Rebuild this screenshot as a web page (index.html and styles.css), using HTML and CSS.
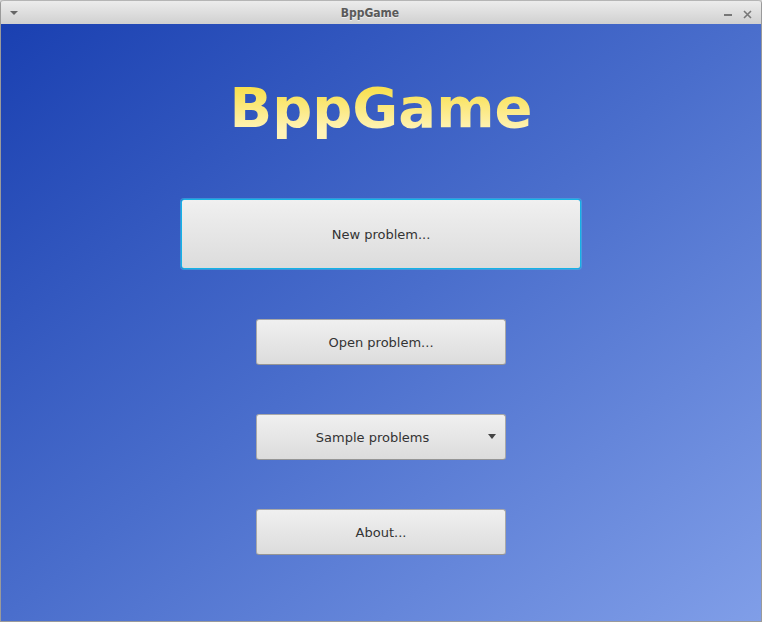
FILE: index.html
```html
<!DOCTYPE html>
<html>
<head>
<meta charset="utf-8">
<title>BppGame</title>
<link rel="stylesheet" href="styles.css">
</head>
<body>
<div class="window">
  <div class="titlebar">
    <span class="tb-menu"></span>
    <span class="tb-title">BppGame</span>
    <span class="tb-controls">
      <span class="tb-min"></span>
      <svg class="tb-close" width="9" height="9" viewBox="0 0 9 9"><path d="M1 1L8 8M8 1L1 8" stroke="#777" stroke-width="1.6"/></svg>
    </span>
  </div>
  <div class="content">
    <h1 class="logo">BppGame</h1>
    <button class="btn btn-big">New problem...</button>
    <button class="btn">Open problem...</button>
    <button class="btn btn-menu"><span class="btn-label">Sample problems</span><span class="arrow"></span></button>
    <button class="btn">About...</button>
  </div>
</div>
</body>
</html>
```
FILE: styles.css
```css
html, body {
  margin: 0;
  padding: 0;
  width: 762px;
  height: 622px;
  overflow: hidden;
  background: #d6d6d6;
}
.window {
  width: 762px;
  height: 622px;
  box-sizing: border-box;
  border: 1px solid #9a9a9a;
  border-top: none;
  border-radius: 4px 4px 0 0;
  display: flex;
  flex-direction: column;
  overflow: hidden;
}
.titlebar {
  height: 23px;
  flex: none;
  background: linear-gradient(#ececec, #d0d0d0);
  border-top: 1px solid #b5b5b5;
  border-radius: 4px 4px 0 0;
  display: flex;
  align-items: center;
  position: relative;
  margin: 0 -1px;
}
.tb-menu {
  position: absolute;
  left: 10px;
  top: 10px;
  width: 0;
  height: 0;
  border-left: 4px solid transparent;
  border-right: 4px solid transparent;
  border-top: 4px solid #666;
}
.tb-title {
  flex: 1;
  text-align: center;
  padding-right: 22px;
  font-family: "DejaVu Sans Condensed", "DejaVu Sans", sans-serif;
  font-weight: bold;
  font-size: 12px;
  color: #5a5a5a;
  text-shadow: 0 1px 0 rgba(255,255,255,0.6);
}
.tb-controls {
  position: absolute;
  right: 10px;
  top: 9px;
  display: flex;
  align-items: center;
  gap: 11px;
}
.tb-min {
  width: 8px;
  height: 2px;
  background: #777;
}
.tb-close { display: block; }
.content {
  flex: 1;
  background: linear-gradient(to bottom right, #1a40b1 0%, #4a6ecc 50%, #809ee8 100%);
  display: flex;
  flex-direction: column;
  align-items: center;
}
.logo {
  margin: 52px 0 0 0;
  font-family: "DejaVu Sans", sans-serif;
  font-weight: bold;
  font-size: 56px;
  line-height: 64px;
  background: linear-gradient(#f8e050 20%, #fff3b8 85%);
  -webkit-background-clip: text;
  background-clip: text;
  color: transparent;
}
.btn {
  width: 250px;
  height: 46px;
  box-sizing: border-box;
  border: 1px solid #a8a8a8;
  border-bottom-color: #959595;
  border-radius: 3px;
  background: linear-gradient(#f0f0f0, #dcdcdc);
  font-family: "DejaVu Sans", sans-serif;
  font-size: 13px;
  color: #333;
  padding: 0;
  margin: 49px 0 0 0;
  display: flex;
  align-items: center;
  justify-content: center;
}
.btn-big {
  width: 400px;
  height: 70px;
  margin-top: 59px;
  border: 1px solid #15b2e6;
  box-shadow: 0 0 0 1px rgba(60, 190, 235, 0.55);
}
.btn-big + .btn { margin-top: 50px; }
.btn-menu { justify-content: flex-start; }
.btn-label {
  flex: 1;
  text-align: center;
}
.arrow {
  width: 0;
  height: 0;
  border-left: 4.5px solid transparent;
  border-right: 4.5px solid transparent;
  border-top: 5px solid #444;
  margin-right: 9px;
  margin-top: -2px;
}
```
